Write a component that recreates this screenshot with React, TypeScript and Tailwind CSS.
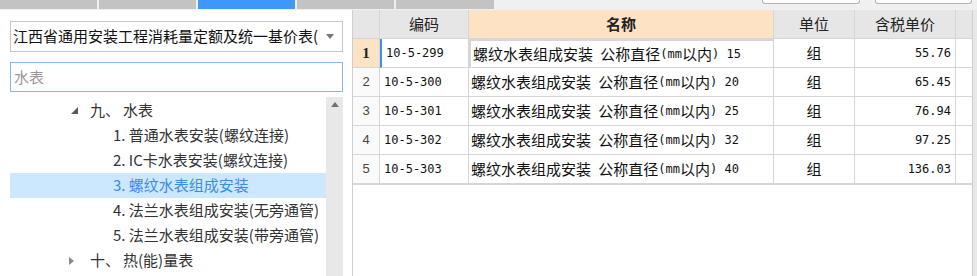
const rows = [
  { no: 1, code: '10-5-299', size: '15', price: '55.76' },
  { no: 2, code: '10-5-300', size: '20', price: '65.45' },
  { no: 3, code: '10-5-301', size: '25', price: '76.94' },
  { no: 4, code: '10-5-302', size: '32', price: '97.25' },
  { no: 5, code: '10-5-303', size: '40', price: '136.03' },
];

const items = [
  '1. 普通水表安装(螺纹连接)',
  '2. IC卡水表安装(螺纹连接)',
  '3. 螺纹水表组成安装',
  '4. 法兰水表组成安装(无旁通管)',
  '5. 法兰水表组成安装(带旁通管)',
];

// ascii runs get a narrow mono face, like the half-width glyphs in the grid
function Mixed({ text }: { text: string }) {
  const parts = text.match(/[\x00-\x7f]+|[^\x00-\x7f]+/g) ?? [];
  return (
    <>
      {parts.map((p, i) =>
        /^[\x00-\x7f]+$/.test(p) ? (
          <span key={i} className="font-['DejaVu_Sans_Mono',monospace] text-[12px] whitespace-pre">
            {p}
          </span>
        ) : (
          <span key={i}>{p}</span>
        )
      )}
    </>
  );
}

const TopBar = () => (
  <div className="h-[10px] flex bg-[#f0f0f0]">
    <div className="h-[9px] w-[97px] bg-[#c3c3c3]"></div>
    <div className="h-[9px] w-[97px] ml-[2px] bg-[#c3c3c3]"></div>
    <div className="h-[9px] w-[97px] ml-[2px] bg-[#3f97f9]"></div>
    <div className="h-[9px] w-[97px] ml-[2px] bg-[#c3c3c3]"></div>
    <div className="h-[9px] w-[98px] ml-[2px] bg-[#c3c3c3]"></div>
    <div className="flex-1"></div>
    <div className="h-[4px] w-[98px] bg-white border border-t-0 border-[#b4b4b4] rounded-b-[3px]"></div>
    <div className="h-[4px] w-[97px] ml-[15px] mr-[5px] bg-white border border-t-0 border-[#b4b4b4] rounded-b-[3px]"></div>
  </div>
);

const LeftPanel = () => (
  <div className="w-[345px] h-full pl-[10px] flex flex-col">
    <div className="mt-[11px] w-[333px] h-[31px] border border-[#c6c6c6] flex items-center pl-[2px] pr-[8px] bg-white">
      <div className="flex-1 overflow-hidden whitespace-nowrap text-[15px] text-[#111]">
        江西省通用安装工程消耗量定额及统一基价表(
      </div>
      <svg width="8" height="5" viewBox="0 0 8 5" className="ml-[8px]">
        <path d="M0 0 L8 0 L4 5 Z" fill="#777" />
      </svg>
    </div>
    <div className="mt-[10px] w-[333px] h-[30px] border border-[#83b9ee] flex items-center pl-[3px]">
      <span className="text-[15px] text-[#9a9a9a]">水表</span>
    </div>
    <div className="mt-[5px] flex flex-1 min-h-0">
      <div className="w-[316px] pt-[1px] text-[15px] text-[#333]">
        <div className="h-[25px] flex items-center">
          <svg width="7" height="7" viewBox="0 0 7 7" className="ml-[61px]">
            <path d="M7 0 L7 7 L0 7 Z" fill="#595959" />
          </svg>
          <span className="ml-[12px]">九、</span>
          <span className="ml-[3px]">水表</span>
        </div>
        {items.map((t, i) => (
          <div
            key={t}
            className={`h-[25px] flex items-center pl-[103px] ${i === 2 ? 'bg-[#cce8ff] text-[#3c8ce7]' : ''}`}
          >
            {t}
          </div>
        ))}
        <div className="h-[25px] flex items-center">
          <svg width="5" height="8" viewBox="0 0 5 8" className="ml-[59px]">
            <path d="M0 0 L5 4 L0 8 Z" fill="#8a8a8a" />
          </svg>
          <span className="ml-[16px]">十、</span>
          <span className="ml-[3px]">热(能)量表</span>
        </div>
      </div>
      <div className="w-[17px] bg-[#e8e8e8] flex justify-center pt-[5px]">
        <svg width="8" height="5" viewBox="0 0 8 5">
          <path d="M0 5 L8 5 L4 0 Z" fill="#707070" />
        </svg>
      </div>
    </div>
  </div>
);

const cols = 'grid grid-cols-[27px_89px_305px_81px_101px_17px]';
const cell = 'border-r border-b border-[#d6d6d6] flex items-center overflow-hidden whitespace-nowrap';

const Grid = () => (
  <div className="flex-1 h-full pl-[7px] flex">
    <div className="w-[620px] h-full border-l border-[#cfcfcf] flex flex-col">
      <div className={`${cols} h-[29px] text-[15px] text-[#222]`}>
        <div className={`${cell} bg-[#e6e6e6]`}></div>
        <div className={`${cell} bg-[#e6e6e6] justify-center`}>编码</div>
        <div className={`${cell} bg-[#fde3c3] justify-center font-bold`}>名称</div>
        <div className={`${cell} bg-[#e6e6e6] justify-center`}>单位</div>
        <div className={`${cell} bg-[#e6e6e6] justify-center`}>含税单价</div>
        <div className={`${cell} bg-[#e6e6e6]`}></div>
      </div>
      {rows.map((r) => (
        <div key={r.no} className={`${cols} h-[29px] text-[15px] text-[#111]`}>
          {r.no === 1 ? (
            <div className={`${cell} justify-center bg-[#fde3c3] font-['Liberation_Serif',serif] text-[15px] font-bold text-[#222]`}>
              {r.no}
            </div>
          ) : (
            <div className={`${cell} justify-center bg-[#fafafa] font-['Liberation_Sans',sans-serif] text-[13px] text-[#444]`}>
              {r.no}
            </div>
          )}
          <div className={`${cell} pl-[4px] ${r.no === 1 ? 'border-l-2 border-l-[#3f8ff0] pl-[2px]' : ''}`}>
            <Mixed text={r.code} />
          </div>
          <div className={`${cell} pl-[2px] ${r.no === 1 ? 'border-2 border-[#6e6e6e] pl-[1px]' : ''}`}>
            <Mixed text={`螺纹水表组成安装 公称直径(mm以内) ${r.size}`} />
          </div>
          <div className={`${cell} justify-center`}>组</div>
          <div className={`${cell} justify-end pr-[4px]`}>
            <Mixed text={r.price} />
          </div>
          <div className={cell}></div>
        </div>
      ))}
      <div className="flex-1 border-t border-[#d6d6d6]"></div>
    </div>
    <div className="w-[5px] h-full border-l border-[#cfcfcf] bg-[#e8e8e8]"></div>
  </div>
);

export default function App() {
  return (
    <div className="w-[977px] h-[276px] overflow-hidden bg-white font-['Noto_Sans_CJK_SC','Microsoft_YaHei',sans-serif] flex flex-col">
      <TopBar />
      <div className="flex flex-1 min-h-0">
        <LeftPanel />
        <Grid />
      </div>
    </div>
  );
}
